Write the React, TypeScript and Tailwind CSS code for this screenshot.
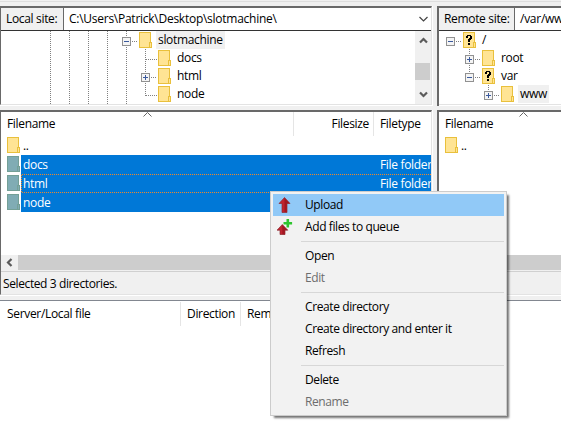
import React from "react";

function Folder({ unknown, selected }: { unknown?: boolean; selected?: boolean }) {
  const fill = selected ? "#80acb4" : "#ffe494";
  const edge = selected ? "#74a096" : "#e9c03c";
  return (
    <svg width="13" height="16" viewBox="0 0 13 16" className="block shrink-0" shapeRendering="crispEdges">
      <rect x="0.5" y="0.5" width="11" height="15" fill={fill} stroke={edge} />
      <rect x="10.5" y="10.5" width="2" height="5" fill={fill} stroke={edge} />
      {unknown && (
        <path d="M3 4h1v-1h4v1h1v3h-1v1h-1v2h-2v-3h1v-1h1v-2h-2v2h-2zM5 11h2v2h-2z" fill="#000" />
      )}
    </svg>
  );
}

function Toggle({ open }: { open?: boolean }) {
  return (
    <svg width="9" height="9" viewBox="0 0 9 9" className="block shrink-0" shapeRendering="crispEdges">
      <rect x="0.5" y="0.5" width="8" height="8" rx="1" fill="#f4f4f4" stroke="#919191" />
      <path d={open ? "M2 4h5v1h-5z" : "M2 4h5v1h-5zM4 2h1v5h-1z"} fill="#3b5a9d" />
    </svg>
  );
}

function Chevron({ dir }: { dir: "up" | "down" | "left" }) {
  const d = { up: "M1 6.5L4.5 3L8 6.5", down: "M1 2.5L4.5 6L8 2.5", left: "M6.5 1L3 4.5L6.5 8" }[dir];
  return (
    <svg width="9" height="9" viewBox="0 0 9 9" className="block">
      <path d={d} fill="none" stroke="#5b5b5b" strokeWidth="2.2" />
    </svg>
  );
}

function SortMark() {
  return (
    <svg width="9" height="5" viewBox="0 0 9 5" className="block">
      <path d="M0.5 4.5L4.5 0.5L8.5 4.5" fill="none" stroke="#666" />
    </svg>
  );
}

function TreeRow({ pad, toggle, unknown, label, active }: { pad: string; toggle?: "open" | "closed"; unknown?: boolean; label: string; active?: boolean }) {
  return (
    <div className={`flex h-[18px] ${pad}`}>
      <div className="mr-2 w-[9px] shrink-0 pt-[6px]">{toggle && <Toggle open={toggle === "open"} />}</div>
      <div className="mr-1 pt-px"><Folder unknown={unknown} /></div>
      <div className={`px-[2px] leading-[18px] ${active ? "bg-[#f0f0f0]" : ""}`}>{label}</div>
    </div>
  );
}

function SiteBar({ label, path, labelWidth, arrow }: { label: string; path: string; labelWidth: string; arrow?: boolean }) {
  return (
    <div className="flex h-[23px] border-b border-[#333]">
      <div className={`shrink-0 bg-[#f0f0f0] pl-[5px] leading-[22px] ${labelWidth}`}>{label}</div>
      <div className="flex grow items-center justify-between border-l border-[#696969] bg-white pl-[5px] pr-[3px] leading-[22px] tracking-[-0.26px]">
        <span>{path}</span>
        {arrow && (
          <svg width="9" height="6" viewBox="0 0 9 6"><path d="M0.5 1L4.5 5L8.5 1" fill="none" stroke="#444" strokeWidth="1.2" /></svg>
        )}
      </div>
    </div>
  );
}

const panel = "overflow-hidden border-t-2 border-[#696969] bg-white";

function FileRow({ name, type, focus }: { name: string; type: string; focus?: boolean }) {
  return (
    <div className="flex h-[19px]">
      <div className="w-5 shrink-0 pl-[6px] pt-px"><Folder selected /></div>
      <div className="relative flex grow bg-[#0078d7] leading-[19px] text-white">
        <span className="w-[359px] shrink-0 pl-[2px]">{name}</span>
        <span className="whitespace-nowrap">{type}</span>
        {focus && (
          <svg width="411" height="19" className="absolute left-0 top-0" shapeRendering="crispEdges">
            <path d="M420 0.5H0.5V18.5H420" fill="none" stroke="#f08728" strokeDasharray="1 1" />
          </svg>
        )}
      </div>
    </div>
  );
}

function ListFooter({ text }: { text: string }) {
  return (
    <>
      <div className="flex h-[15px] bg-[#cdcdcd]">
        <div className="flex w-[17px] items-center justify-center bg-[#f0f0f0]"><Chevron dir="left" /></div>
      </div>
      <div className="h-px bg-[#f0f0f0]" />
      <div className="h-[23px] border-t border-[#d0d0d0] bg-[#f0f0f0] pl-[2px] leading-[24px] tracking-[-0.39px]">{text}</div>
    </>
  );
}

function MenuItem({ label, icon, active, disabled }: { label: string; icon?: React.ReactNode; active?: boolean; disabled?: boolean }) {
  return (
    <div className={`flex h-[22px] items-center ${active ? "bg-[#91c9f7]" : ""} ${disabled ? "text-[#6d6d6d]" : ""}`}>
      <div className="flex w-8 shrink-0 pl-1">{icon}</div>
      <span>{label}</span>
    </div>
  );
}

const Separator = () => <div className="my-[3px] ml-7 h-px bg-[#d7d7d7]" />;

function UploadIcon() {
  return (
    <svg width="16" height="16" viewBox="0 0 16 16">
      <path d="M7.5 0.5L13 6.5H10V15.5H5V6.5H2z" fill="#c0232f" stroke="#8c2b32" strokeWidth=".7" />
      <path d="M7.5 1V15H9.8V6.2H12.5z" fill="#a01822" />
    </svg>
  );
}

function AddIcon() {
  return (
    <svg width="16" height="16" viewBox="0 0 16 16">
      <path d="M5.3 5.5L10.8 11.2H8V15.5H3V11.2H0z" fill="#c0232f" stroke="#8c2b32" strokeWidth=".7" />
      <path d="M5.3 6V15.2H7.8V11H10.3z" fill="#a01822" />
      <path d="M9.5 0h2.6v3h3v2.4h-3v3h-2.6v-3h-3v-2.4h3z" fill="#2fc52f" />
    </svg>
  );
}

export default function App() {
  return (
    <div className="relative flex h-[433px] w-[561px] flex-col overflow-hidden whitespace-nowrap bg-[#f0f0f0] font-['Open_Sans','Noto_Sans',sans-serif] text-[12px] tracking-[-0.33px] text-black">
      <div className="h-[6px] shrink-0 pt-px"><div className="h-px bg-[#dedede]" /></div>

      <div className="flex h-[100px] shrink-0">
        <div className="mr-1 w-[433px] shrink-0 border-b border-r border-white">
          <div className={`h-[99px] border-b border-b-[#e3e3e3] border-l border-r border-r-[#e3e3e3] ${panel}`}>
            <SiteBar label="Local site:" path="C:\Users\Patrick\Desktop\slotmachine\" labelWidth="w-[62px]" arrow />
            <div className="flex h-[73px]">
              <div className="relative grow">
                <svg width="200" height="73" className="absolute left-0 top-0" shapeRendering="crispEdges">
                  <path d="M49.5 0V73M68.5 0V73M87.5 0V73M106.5 0V73M125.5 0V73M144.5 18V65M131 10.5H137M145 28.5H156M150 46.5H156M145 64.5H156" stroke="#808080" strokeDasharray="1 1" fill="none" />
                </svg>
                <div className="relative">
                  <TreeRow pad="pl-[121px]" toggle="open" label="slotmachine" active />
                  <TreeRow pad="pl-[140px]" label="docs" />
                  <TreeRow pad="pl-[140px]" toggle="closed" label="html" />
                  <TreeRow pad="pl-[140px]" label="node" />
                </div>
              </div>
              <div className="flex w-4 flex-col items-center bg-[#f0f0f0] pb-1 pt-[5px]">
                <Chevron dir="up" />
                <div className="mb-[10px] mt-[18px] h-[17px] w-full border-r border-[#f0f0f0] bg-[#cdcdcd]" />
                <Chevron dir="down" />
              </div>
            </div>
          </div>
        </div>
        <div className={`grow border-l-2 ${panel}`}>
          <SiteBar label="Remote site:" path="/var/www" labelWidth="w-[75px]" />
          <div className="relative h-[73px]">
            <svg width="110" height="73" className="absolute left-0 top-0" shapeRendering="crispEdges">
              <path d="M30.5 18V46M49.5 54V64M17 10.5H23M36 28.5H42M36 46.5H42M55 64.5H61" stroke="#808080" strokeDasharray="1 1" fill="none" />
            </svg>
            <div className="relative">
              <TreeRow pad="pl-[7px]" toggle="open" unknown label="/" />
              <TreeRow pad="pl-[26px]" toggle="closed" label="root" />
              <TreeRow pad="pl-[26px]" toggle="open" unknown label="var" />
              <TreeRow pad="pl-[45px]" toggle="closed" label="www" active />
            </div>
          </div>
          <div className="h-px bg-[#e3e3e3]" />
        </div>
      </div>

      <div className="mt-1 flex h-[186px] shrink-0">
        <div className="mr-1 w-[433px] shrink-0 border-b border-r border-white">
          <div className={`flex h-[185px] flex-col border-b border-b-[#e3e3e3] border-l border-r border-r-[#e3e3e3] ${panel}`}>
            <div className="relative flex h-6 shrink-0 leading-6">
              <div className="absolute left-[142px] top-0"><SortMark /></div>
              <div className="w-[293px] border-r border-[#e5e5e5] pl-[6px]">Filename</div>
              <div className="w-20 border-r border-[#e5e5e5] pr-1 text-right">Filesize</div>
              <div className="pl-[6px]">Filetype</div>
            </div>
            <div className="flex h-[19px] shrink-0 pl-[6px] leading-[19px]"><div className="mr-[3px] pt-px"><Folder /></div>..</div>
            <FileRow name="docs" type="File folder" />
            <FileRow name="html" type="File folder" focus />
            <FileRow name="node" type="File folder" />
            <div className="grow" />
            <ListFooter text="Selected 3 directories." />
          </div>
        </div>
        <div className={`flex grow flex-col border-l-2 ${panel}`}>
          <div className="relative h-6 shrink-0 pl-[6px] leading-6">
            <div className="absolute left-[80px] top-0"><SortMark /></div>
            Filename
          </div>
          <div className="flex h-[19px] shrink-0 pl-[6px] leading-[19px]"><div className="mr-[3px] pt-px"><Folder /></div>..</div>
          <div className="grow" />
          <ListFooter text="" />
          <div className="h-[2px] border-t border-[#e3e3e3] bg-white" />
        </div>
      </div>

      <div className="mt-1 grow border-t border-[#828790] bg-white pt-px">
        <div className="flex h-6 leading-6">
          <div className="w-[181px] border-r border-[#e5e5e5] pl-[7px]">Server/Local file</div>
          <div className="w-[60px] border-r border-[#e5e5e5] pl-[6px]">Direction</div>
          <div className="pl-[6px]">Remote file</div>
        </div>
      </div>

      <div className="absolute left-[270px] top-[191px] w-[237px] border border-[#cccccc] bg-[#f2f2f2] p-[2px] tracking-[-0.4px] shadow-[3px_3px_2px_-1px_rgba(0,0,0,0.55)]">
        <MenuItem label="Upload" icon={<UploadIcon />} active />
        <MenuItem label="Add files to queue" icon={<AddIcon />} />
        <Separator />
        <MenuItem label="Open" />
        <MenuItem label="Edit" disabled />
        <Separator />
        <MenuItem label="Create directory" />
        <MenuItem label="Create directory and enter it" />
        <MenuItem label="Refresh" />
        <Separator />
        <MenuItem label="Delete" />
        <MenuItem label="Rename" disabled />
      </div>
    </div>
  );
}
